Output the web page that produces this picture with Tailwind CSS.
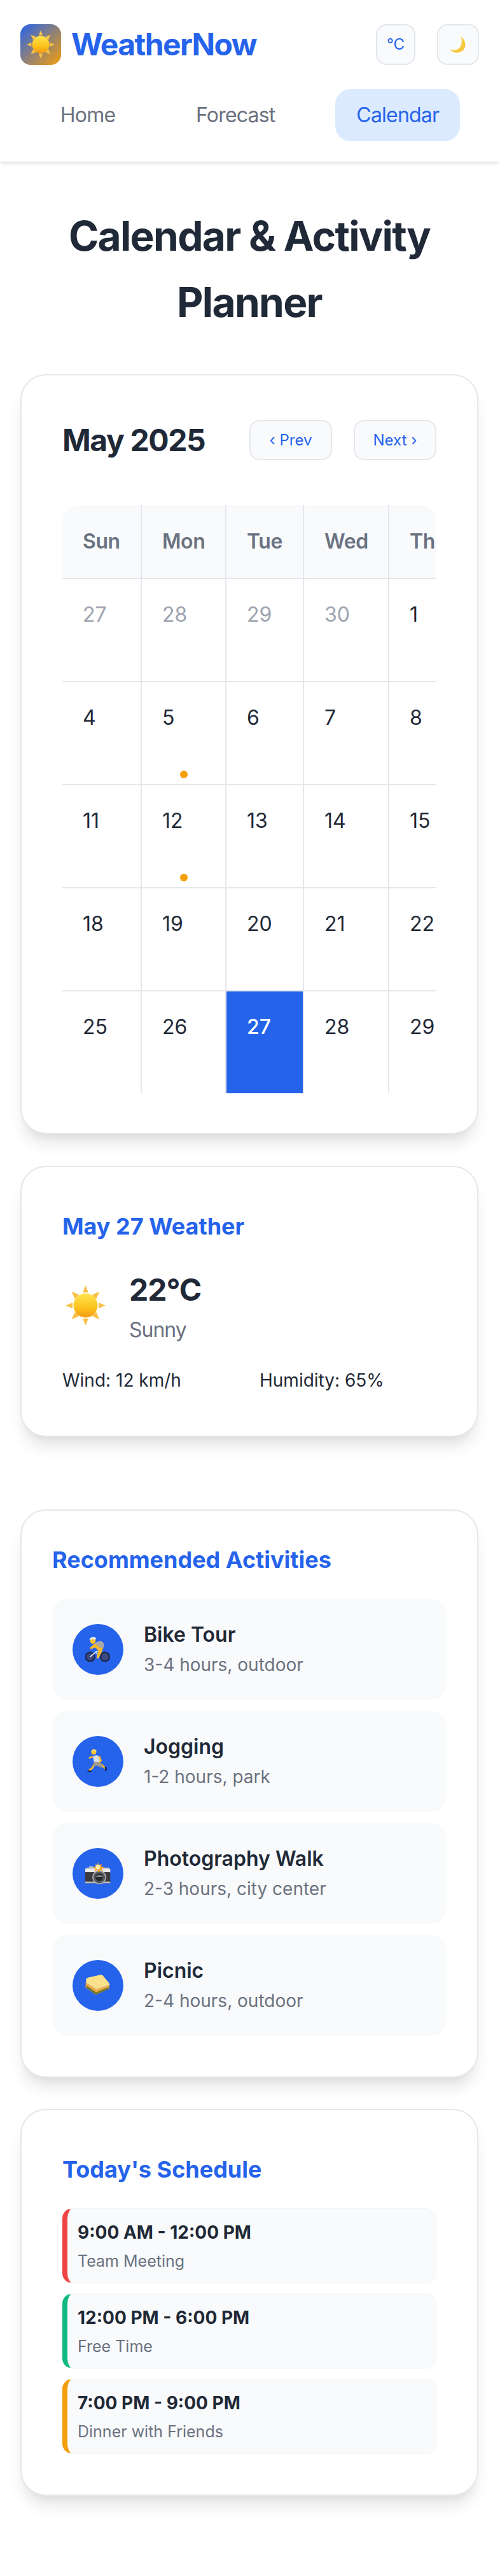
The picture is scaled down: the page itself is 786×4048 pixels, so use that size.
<!DOCTYPE html>
<html lang="en">
<head>
  <meta charset="UTF-8">
  <meta name="viewport" content="width=device-width, initial-scale=1.0">
  <title>WeatherNow | Calendar</title>
  <script src="https://cdn.jsdelivr.net/npm/@tailwindcss/browser@4"></script>
</head>
<body class="bg-white font-['Inter',sans-serif] text-[#1f2937]">

  <!-- shared emoji art -->
  <svg class="absolute w-0 h-0" aria-hidden="true">
    <defs>
      <linearGradient id="sunFill" x1="0" y1="0" x2="0" y2="1">
        <stop offset="0" stop-color="#ffe44f"/>
        <stop offset="0.6" stop-color="#fcc21b"/>
        <stop offset="1" stop-color="#f39a12"/>
      </linearGradient>
      <linearGradient id="moonFill" x1="0" y1="0" x2="1" y2="1">
        <stop offset="0" stop-color="#f7d34f"/>
        <stop offset="1" stop-color="#f3c53a"/>
      </linearGradient>
      <symbol id="sun" viewBox="0 0 100 100">
        <g fill="#f8c146">
          <path d="M50 7l6 15H44z"/>
          <path d="M50 93l6-15H44z"/>
          <path d="M7 50l15-6v12z"/>
          <path d="M93 50l-15-6v12z"/>
          <path d="M20 20l16 7-9 9z"/>
          <path d="M80 20l-16 7 9 9z"/>
          <path d="M20 80l16-7-9-9z"/>
          <path d="M80 80l-16-7 9-9z"/>
        </g>
        <circle cx="50" cy="50" r="26" fill="url(#sunFill)"/>
      </symbol>
    </defs>
  </svg>

  <header class="bg-white shadow-[0_4px_6px_-1px_rgba(0,0,0,0.1),0_2px_4px_-1px_rgba(0,0,0,0.06)] pt-[38px] pb-8 h-[254px]">
    <div class="flex items-center justify-between pl-8 pr-[33px]">
      <div class="flex items-center gap-4">
        <div class="w-16 h-16 rounded-2xl bg-[linear-gradient(135deg,#2563eb,#f59e0b)] flex items-center justify-center">
          <svg class="w-[52px] h-[52px]"><use href="#sun"/></svg>
        </div>
        <span class="text-5xl font-bold tracking-[-1.6px] text-[#2563eb]">WeatherNow</span>
      </div>
      <div class="flex items-center gap-[34px]">
        <button class="w-[62px] h-16 rounded-2xl bg-[#f9fafb] border-2 border-[#e5e7eb] text-2xl text-[#2563eb]">°C</button>
        <button class="w-[66px] h-16 rounded-2xl bg-[#f9fafb] border-2 border-[#e5e7eb] flex items-center justify-center">
          <svg class="w-[26px] h-[28px]" viewBox="0 0 100 100"><path fill="url(#moonFill)" d="M66 0C92 18 104 56 84 82 62 106 20 104 0 80c26 10 56 2 68-24C74 36 74 16 66 0Z"/></svg>
        </button>
      </div>
    </div>
    <nav class="flex justify-evenly mt-[38px] text-[32px] leading-[50px] tracking-[-0.8px]">
      <a class="px-8 py-4 rounded-3xl text-[#6b7280]">Home</a>
      <a class="px-8 py-4 rounded-3xl text-[#6b7280]">Forecast</a>
      <a class="px-[33px] py-4 rounded-3xl text-[#2563eb] bg-[#dbeafe]">Calendar</a>
    </nav>
  </header>

  <main class="pl-8 pr-[34px] pb-[130px]">
    <h1 class="text-center text-[64px] leading-[104px] font-bold tracking-[-1.7px] mt-[65px] mb-[61px]">Calendar &amp; Activity Planner</h1>

    <!-- calendar -->
    <section class="bg-white border-2 border-[#e5e7eb] rounded-[40px] shadow-[0_20px_25px_-5px_rgba(0,0,0,0.1),0_10px_10px_-5px_rgba(0,0,0,0.04)] pt-[70px] pb-[62px] px-16">
      <div class="flex items-center justify-between h-[63px] mb-[71px]">
        <h2 class="text-5xl font-bold tracking-[-1.4px]">May 2025</h2>
        <div class="flex gap-[34px]">
          <button class="w-[130px] h-[63px] rounded-2xl bg-[#f9fafb] border-2 border-[#e5e7eb] text-2xl text-[#2563eb]">‹ Prev</button>
          <button class="w-[130px] h-[63px] rounded-2xl bg-[#f9fafb] border-2 border-[#e5e7eb] text-2xl text-[#2563eb]">Next ›</button>
        </div>
      </div>
      <div class="overflow-hidden rounded-3xl">
        <table class="table-fixed w-[648px] border-separate border-spacing-0 text-[32px] leading-[50px] [&_th]:h-[116px] [&_th]:pl-8 [&_th]:text-left [&_th]:font-semibold [&_th]:tracking-[-0.4px] [&_th]:text-[#6b7280] [&_th]:bg-[#f9fafb] [&_th]:border-r-2 [&_th]:border-b-2 [&_th]:border-[#e5e7eb] [&_td]:relative [&_td]:h-[162px] [&_td]:pl-8 [&_td]:pt-[31px] [&_td]:align-top [&_td]:border-r-2 [&_td]:border-b-2 [&_td]:border-[#e5e7eb] [&_tr:last-child_td]:border-b-0 [&_tr:last-child_td]:h-[160px]">
          <colgroup>
            <col class="w-[125px]"><col class="w-[133px]"><col class="w-[122px]"><col class="w-[134px]"><col class="w-[134px]">
          </colgroup>
          <thead>
            <tr><th>Sun</th><th>Mon</th><th>Tue</th><th>Wed</th><th>Thu</th></tr>
          </thead>
          <tbody>
            <tr>
              <td class="text-[#9ca3af]">27</td><td class="text-[#9ca3af]">28</td><td class="text-[#9ca3af]">29</td><td class="text-[#9ca3af]">30</td><td>1</td>
            </tr>
            <tr>
              <td>4</td>
              <td>5<span class="absolute bottom-[9px] left-1/2 -translate-x-1/2 w-3 h-3 rounded-full bg-[#f59e0b]"></span></td>
              <td>6</td><td>7</td><td>8</td>
            </tr>
            <tr>
              <td>11</td>
              <td>12<span class="absolute bottom-[9px] left-1/2 -translate-x-1/2 w-3 h-3 rounded-full bg-[#f59e0b]"></span></td>
              <td>13</td><td>14</td><td>15</td>
            </tr>
            <tr>
              <td>18</td><td>19</td><td>20</td><td>21</td><td>22</td>
            </tr>
            <tr>
              <td>25</td><td>26</td><td class="bg-[#2563eb] text-white font-medium">27</td><td>28</td><td>29</td>
            </tr>
          </tbody>
        </table>
      </div>
    </section>

    <!-- selected day weather -->
    <section class="mt-[50px] bg-white border-2 border-[#e5e7eb] rounded-[40px] shadow-[0_20px_25px_-5px_rgba(0,0,0,0.1),0_10px_10px_-5px_rgba(0,0,0,0.04)] p-16">
      <h3 class="text-4xl leading-[58px] font-bold text-[#2563eb] mb-8">May 27 Weather</h3>
      <div class="flex items-center gap-8">
        <svg class="w-[73px] h-[73px] shrink-0"><use href="#sun"/></svg>
        <div>
          <div class="text-5xl leading-[77px] font-bold tracking-[-1px]">22°C</div>
          <div class="text-[32px] leading-[50px] tracking-[-1px] text-[#6b7280]">Sunny</div>
        </div>
      </div>
      <div class="grid grid-cols-2 gap-8 mt-8 text-[28px] leading-[45px]">
        <div>Wind: 12 km/h</div>
        <div>Humidity: 65%</div>
      </div>
    </section>

    <!-- activities -->
    <section class="mt-[114px] bg-white border-2 border-[#e5e7eb] rounded-[40px] shadow-[0_20px_25px_-5px_rgba(0,0,0,0.1),0_10px_10px_-5px_rgba(0,0,0,0.04)] pt-12 pb-16 px-12">
      <h3 class="text-4xl leading-[58px] font-bold text-[#2563eb] mb-8">Recommended Activities</h3>
      <div class="flex flex-col gap-[17px]">
        <div class="flex items-center gap-8 h-[159px] px-8 rounded-3xl bg-[#f9fafb]">
          <div class="w-20 h-20 rounded-full bg-[#2563eb] flex items-center justify-center shrink-0">
            <svg class="w-10 h-10" viewBox="72 72 120 120">
              <g fill="#3b4a80" stroke="#1c2750" stroke-width="7">
                <circle cx="95" cy="167" r="21"/><circle cx="165" cy="167" r="21"/>
              </g>
              <path d="M95 167l28-24 14 26M123 143l22-4" fill="none" stroke="#dfe8f5" stroke-width="5"/>
              <path d="M118 103l26-8 16 16-10 34-16 30-10-2 10-34-14-16-22 8-4-8z" fill="#f5b52c"/>
              <path d="M118 103c8-10 26-14 36-6 8 8 8 20 2 30l-16-4z" fill="#a9a9a9"/>
              <circle cx="108" cy="92" r="13" fill="#fbc02d"/>
              <path d="M92 88c0-14 22-20 32-8l-4 6c-10-4-20-2-28 2z" fill="#e8edf2"/>
            </svg>
          </div>
          <div>
            <div class="text-[32px] leading-[50px] font-semibold">Bike Tour</div>
            <div class="text-[28px] leading-[45px] text-[#6b7280]">3-4 hours, outdoor</div>
          </div>
        </div>
        <div class="flex items-center gap-8 h-[159px] px-8 rounded-3xl bg-[#f9fafb]">
          <div class="w-20 h-20 rounded-full bg-[#2563eb] flex items-center justify-center shrink-0">
            <svg class="w-10 h-10" viewBox="72 72 120 120">
              <path d="M126 136l26 14 14 16" fill="none" stroke="#f5b52c" stroke-width="9"/>
              <path d="M120 140l-16 24-16 12" fill="none" stroke="#f5b52c" stroke-width="9"/>
              <path d="M84 173l18 3 -2 6-18-1z" fill="#1c2750"/>
              <path d="M164 158l10 2-2 18-7-2z" fill="#1c2750"/>
              <path d="M108 108l16-6 14 6 6 18-8 14-22-2z" fill="#d9dee6"/>
              <path d="M112 134l26 2 18 16-6 10-20-10-18 0z" fill="#a19a8d"/>
              <path d="M108 110l-14 4-4 4" fill="none" stroke="#f5b52c" stroke-width="8"/>
              <path d="M138 108l8 20-8 8" fill="none" stroke="#f5b52c" stroke-width="8"/>
              <circle cx="112" cy="88" r="12" fill="#f7c33b"/>
              <path d="M100 86c0-12 20-16 26-4l-4 6c-8-4-14-4-22-2z" fill="#f2d36b"/>
            </svg>
          </div>
          <div>
            <div class="text-[32px] leading-[50px] font-semibold">Jogging</div>
            <div class="text-[28px] leading-[45px] text-[#6b7280]">1-2 hours, park</div>
          </div>
        </div>
        <div class="flex items-center gap-8 h-[159px] px-8 rounded-3xl bg-[#f9fafb]">
          <div class="w-20 h-20 rounded-full bg-[#2563eb] flex items-center justify-center shrink-0">
            <svg class="w-10 h-10" viewBox="72 72 120 120">
              <path d="M78 104h12v-6h20v6h74v10H74z" fill="#bfc1c4"/>
              <rect x="70" y="110" width="120" height="18" fill="#e9e9e9"/>
              <rect x="70" y="126" width="120" height="52" rx="4" fill="#3b3b3d"/>
              <rect x="70" y="170" width="120" height="8" fill="#b9b9bb"/>
              <circle cx="138" cy="150" r="30" fill="#55575c" stroke="#a9abb0" stroke-width="5"/>
              <circle cx="138" cy="150" r="18" fill="#26282c"/>
              <path d="M120 148c8-10 28-10 36 0z" fill="#8c9299"/>
              <path d="M132 78l6 16 14-8-6 14 16 2-14 8 10 12-16-6-6 14-6-14-16 6 8-12-14-8 16-2-6-14 12 8z" fill="#f59f1c"/>
              <circle cx="132" cy="102" r="11" fill="#fff0a8"/>
            </svg>
          </div>
          <div>
            <div class="text-[32px] leading-[50px] font-semibold">Photography Walk</div>
            <div class="text-[28px] leading-[45px] text-[#6b7280]">2-3 hours, city center</div>
          </div>
        </div>
        <div class="flex items-center gap-8 h-[159px] px-8 rounded-3xl bg-[#f9fafb]">
          <div class="w-20 h-20 rounded-full bg-[#2563eb] flex items-center justify-center shrink-0">
            <svg class="w-10 h-10" viewBox="72 72 120 120">
              <path d="M76 122l46 32 64-22 -2 16-62 28-50-36z" fill="#d98a3d"/>
              <path d="M80 134l42 30 60-24-4 10-56 24-42-30z" fill="#5d7a2c"/>
              <path d="M74 118l48 34 64-22 0 8-62 26-50-36z" fill="#f7a43b"/>
              <path d="M78 100c-4 8-4 16 0 20l46 30 62-20c2-4 0-8-4-12l-28-34c-2-2-6-3-10-2l-54 12c-6 1-10 3-12 6z" fill="#f9e08a"/>
              <path d="M78 120l46 30 62-20-2 6-60 22-46-32z" fill="#e8b355"/>
            </svg>
          </div>
          <div>
            <div class="text-[32px] leading-[50px] font-semibold">Picnic</div>
            <div class="text-[28px] leading-[45px] text-[#6b7280]">2-4 hours, outdoor</div>
          </div>
        </div>
      </div>
    </section>

    <!-- schedule -->
    <section class="mt-[49px] bg-white border-2 border-[#e5e7eb] rounded-[40px] shadow-[0_20px_25px_-5px_rgba(0,0,0,0.1),0_10px_10px_-5px_rgba(0,0,0,0.04)] pt-16 pb-16 px-16">
      <h3 class="text-4xl leading-[58px] font-bold text-[#2563eb] mb-8">Today's Schedule</h3>
      <div class="flex flex-col gap-4">
        <div class="h-[118px] pl-4 flex flex-col justify-center rounded-2xl bg-[#f9fafb] border border-gray-100 border-l-8 border-l-[#ef4444]">
          <div class="text-[28px] leading-[45px] font-bold">9:00 AM - 12:00 PM</div>
          <div class="text-[25px] leading-[38px] mt-[3px] text-[#6b7280]">Team Meeting</div>
        </div>
        <div class="h-[118px] pl-4 flex flex-col justify-center rounded-2xl bg-[#f9fafb] border border-gray-100 border-l-8 border-l-[#10b981]">
          <div class="text-[28px] leading-[45px] font-bold">12:00 PM - 6:00 PM</div>
          <div class="text-[25px] leading-[38px] mt-[3px] text-[#6b7280]">Free Time</div>
        </div>
        <div class="h-[118px] pl-4 flex flex-col justify-center rounded-2xl bg-[#f9fafb] border border-gray-100 border-l-8 border-l-[#f59e0b]">
          <div class="text-[28px] leading-[45px] font-bold">7:00 PM - 9:00 PM</div>
          <div class="text-[25px] leading-[38px] mt-[3px] text-[#6b7280]">Dinner with Friends</div>
        </div>
      </div>
    </section>
  </main>
</body>
</html>
